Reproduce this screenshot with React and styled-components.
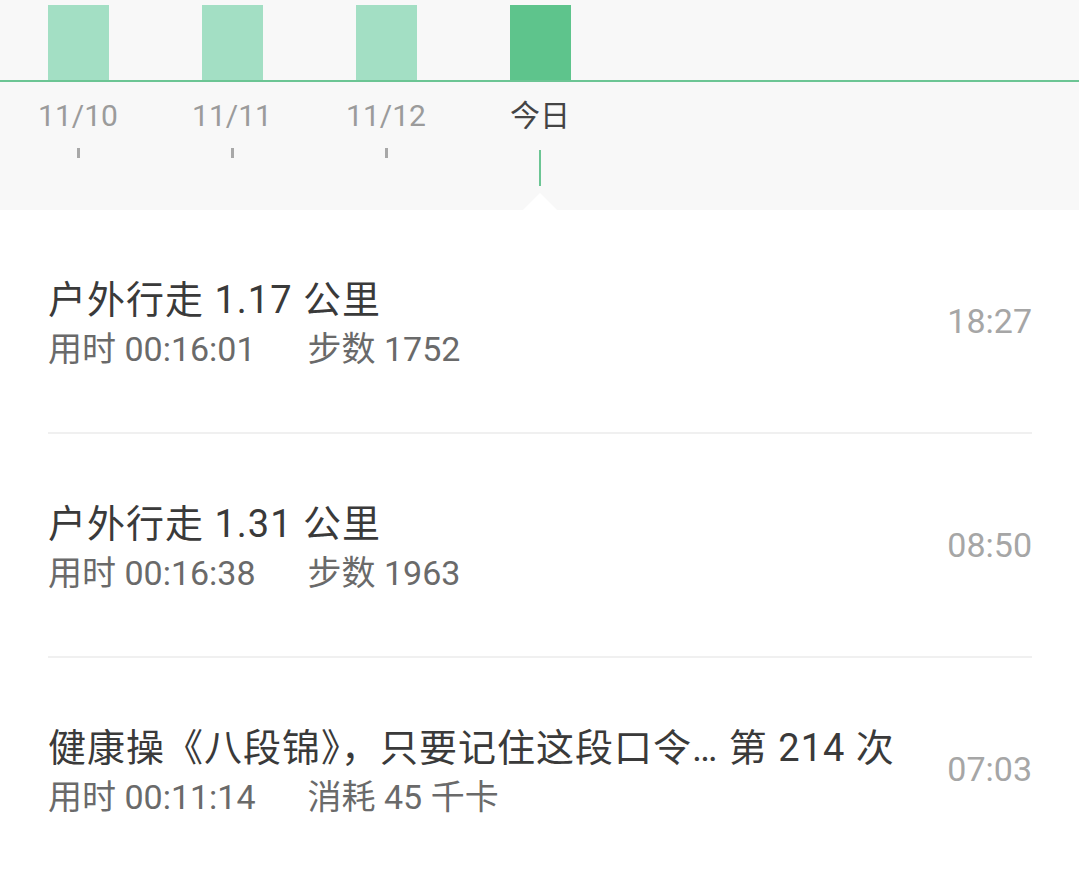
import React from "react";
import styled, { createGlobalStyle } from "styled-components";

const GlobalStyle = createGlobalStyle`
  html, body {
    margin: 0;
    padding: 0;
    background: #ffffff;
  }
  body {
    font-family: Roboto, "Noto Sans CJK SC", sans-serif;
    width: 1079px;
    overflow: hidden;
  }
`;

const Page = styled.div`
  width: 1079px;
  height: 876px;
  display: flex;
  flex-direction: column;
  background: #ffffff;
`;

const Chart = styled.div`
  flex-shrink: 0;
  height: 210px;
  background-color: #f8f8f8;
  display: flex;
  flex-direction: column;
`;

const BarsRow = styled.div`
  height: 80px;
  display: flex;
  padding-left: 1px;
  align-items: flex-end;
`;

const BarSlot = styled.div`
  width: 154px;
  height: 75px;
  display: flex;
  justify-content: center;
`;

const Bar = styled.div`
  width: 61px;
  height: 100%;
  background-color: ${({ $active }) => ($active ? "#5ec48c" : "#a3dfc4")};
`;

const BaseLine = styled.div`
  height: 2px;
  background-color: #6cc594;
`;

const LabelsRow = styled.div`
  flex: 1;
  display: flex;
  padding-left: 1px;
`;

const LabelSlot = styled.div`
  position: relative;
  width: 154px;
  display: flex;
  flex-direction: column;
  align-items: center;
`;

const DayLabel = styled.div`
  margin-top: 16px;
  font-size: 30px;
  line-height: 36px;
  color: ${({ $active }) => ($active ? "#444444" : "#9b9b9b")};
`;

const Tick = styled.div`
  width: ${({ $active }) => ($active ? "2px" : "3px")};
  margin-top: ${({ $active }) => ($active ? "16px" : "14px")};
  height: ${({ $active }) => ($active ? "36px" : "10px")};
  background-color: ${({ $active }) => ($active ? "#6cc594" : "#a8a8a8")};
`;

const Notch = styled.div`
  position: absolute;
  bottom: 0;
  left: 50%;
  transform: translateX(-50%);
  width: 0;
  height: 0;
  border-left: 17px solid transparent;
  border-right: 17px solid transparent;
  border-bottom: 17px solid #ffffff;
`;

const List = styled.div`
  display: flex;
  flex-direction: column;
`;

const Row = styled.div`
  flex-shrink: 0;
  height: 222px;
  padding: 0 48px 0 48px;
  display: flex;
  align-items: center;
  justify-content: space-between;
`;

const Info = styled.div`
  display: flex;
  flex-direction: column;
  padding-top: 8px;
`;

const Title = styled.div`
  font-size: 38px;
  line-height: 48px;
  letter-spacing: 1px;
  color: #3a3a3a;
  white-space: nowrap;
`;

const Meta = styled.div`
  display: flex;
  font-size: 34px;
  line-height: 50px;
  color: #6a6a6a;
  gap: 52px;
`;

const Time = styled.div`
  font-size: 34px;
  color: #a6a6a6;
  margin-right: -1px;
`;

const Divider = styled.div`
  flex-shrink: 0;
  height: 2px;
  margin: 0 47px 0 48px;
  background-color: #f0f0f0;
`;

const days = [
  { label: "11/10" },
  { label: "11/11" },
  { label: "11/12" },
  { label: "今日", active: true },
];

const records = [
  {
    title: "户外行走 1.17 公里",
    duration: "用时 00:16:01",
    extra: "步数 1752",
    time: "18:27",
  },
  {
    title: "户外行走 1.31 公里",
    duration: "用时 00:16:38",
    extra: "步数 1963",
    time: "08:50",
  },
  {
    title: "健康操《八段锦》，只要记住这段口令… 第 214 次",
    duration: "用时 00:11:14",
    extra: "消耗 45 千卡",
    time: "07:03",
  },
];

const App = () => {
  return (
    <Page>
      <GlobalStyle />
      <Chart>
        <BarsRow>
          {days.map((d) => (
            <BarSlot key={d.label}>
              <Bar $active={d.active} />
            </BarSlot>
          ))}
        </BarsRow>
        <BaseLine />
        <LabelsRow>
          {days.map((d) => (
            <LabelSlot key={d.label}>
              <DayLabel $active={d.active}>{d.label}</DayLabel>
              <Tick $active={d.active} />
              {d.active && <Notch />}
            </LabelSlot>
          ))}
        </LabelsRow>
      </Chart>
      <List>
        {records.map((r, i) => (
          <React.Fragment key={r.time}>
            <Row>
              <Info>
                <Title>{r.title}</Title>
                <Meta>
                  <span>{r.duration}</span>
                  <span>{r.extra}</span>
                </Meta>
              </Info>
              <Time>{r.time}</Time>
            </Row>
            {i < records.length - 1 && <Divider />}
          </React.Fragment>
        ))}
      </List>
    </Page>
  );
};

export default App;
